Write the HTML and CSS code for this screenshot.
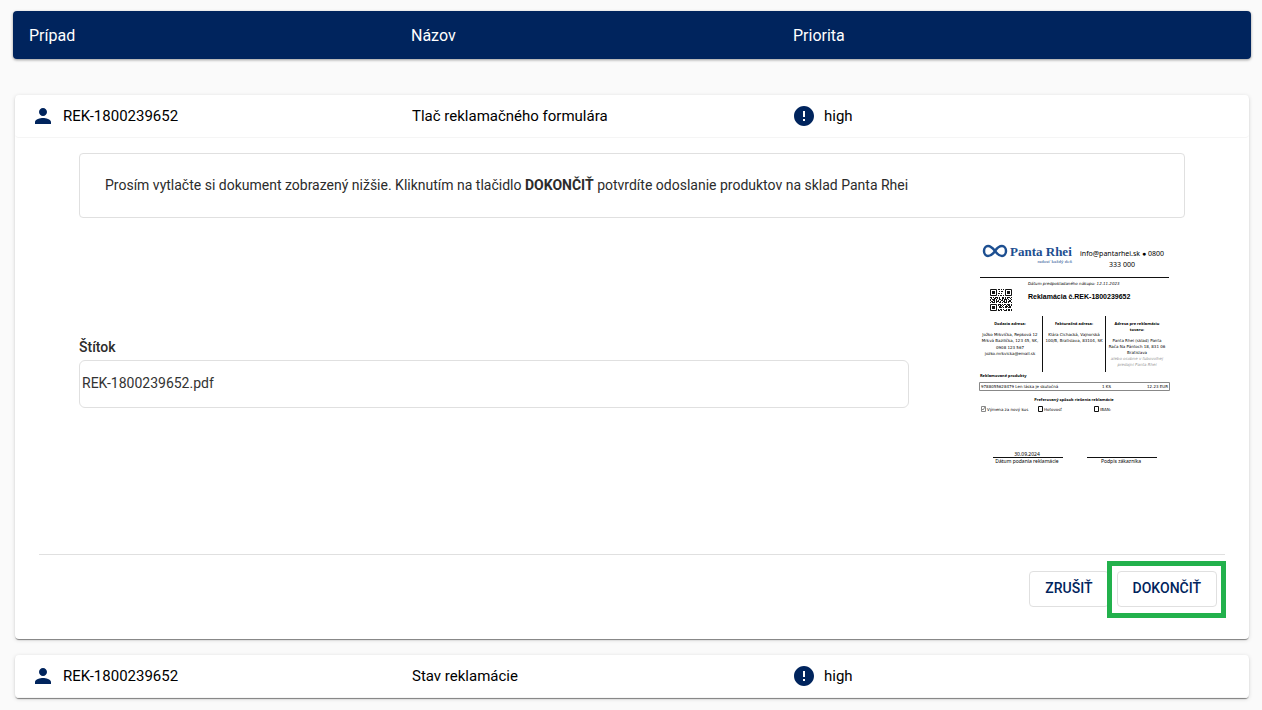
FILE: index.html
```html
<!DOCTYPE html>
<html lang="sk">
<head>
    <meta charset="UTF-8">
    <meta name="viewport" content="width=device-width, initial-scale=1.0">
    <title>Reklamácie</title>
    <link rel="stylesheet" href="styles.css">
</head>
<body>
    <svg width="0" height="0" class="sprite">
        <symbol id="icon-person" viewBox="2 2 20 20">
            <path d="M12 12c2.210 0 4-1.790 4-4s-1.790-4-4-4-4 1.790-4 4 1.790 4 4 4zm0 2c-2.670 0-8 1.340-8 4v2h16v-2c0-2.660-5.330-4-8-4z"/>
        </symbol>
        <symbol id="icon-error" viewBox="2 2 20 20">
            <path d="M12 2C6.480 2 2 6.480 2 12s4.480 10 10 10 10-4.480 10-10S17.520 2 12 2zm1 15h-2v-2h2v2zm0-4h-2V7h2v6z"/>
        </symbol>
    </svg>

    <header class="table-head">
        <span>Prípad</span>
        <span>Názov</span>
        <span>Priorita</span>
    </header>

    <main class="case-list">
        <section class="card">
            <div class="case-row">
                <span class="cell"><svg class="icon"><use href="#icon-person"/></svg>REK-1800239652</span>
                <span class="cell">Tlač reklamačného formulára</span>
                <span class="cell"><svg class="icon"><use href="#icon-error"/></svg>high</span>
            </div>
            <div class="details">
                <div class="task">
                    <p class="info">Prosím vytlačte si dokument zobrazený nižšie. Kliknutím na tlačidlo <b>DOKONČIŤ</b> potvrdíte odoslanie produktov na sklad Panta Rhei</p>
                    <div class="document">
                        <div class="field">
                            <label for="label-file">Štítok</label>
                            <input type="text" id="label-file" value="REK-1800239652.pdf" readonly>
                        </div>
                        <svg class="preview" viewBox="0 4 221 312">
                            <!-- logo -->
                            <path class="logo-mark" d="M31 26c-3-4-5-5-7-5a4 5 0 0 0 0 10c3 0 5-2 7-5s4-5 7-5a4 5 0 0 1 0 10c-2 0-4-1-7-5z"/>
                            <text class="logo-text" x="46" y="31">Panta Rhei</text>
                            <text class="logo-sub" x="108" y="38">radosť každý deň</text>
                            <text class="contact" x="158" y="31">info@pantarhei.sk ● 0800</text>
                            <text class="contact" x="158" y="42">333 000</text>
                            <path class="rule" d="M16 52.500h189"/>

                            <!-- QR code -->
                            <g class="qr">
                                <path d="M26.500 64.500h6v6h-6zM41.500 64.500h6v6h-6zM26.500 79.500h6v6h-6z"/>
                                <path d="M28 67.500h3M43 67.500h3M28 82.500h3" stroke-width="3"/>
                                <path d="M34 64.500h6M34 68.500h5" stroke-dasharray="2 1 1 1"/>
                                <path d="M35 66.500h5M34 70.500h6" stroke-dasharray="1 1 2 1"/>
                                <path d="M26 72.500h22M27 76.500h21" stroke-dasharray="2 1 1 1 3 1 1 2"/>
                                <path d="M26 74.500h22M26 77.500h22" stroke-dasharray="1 1 3 1 1 2 2 1"/>
                                <path d="M27 73.500h20M26 75.500h21" stroke-dasharray="1 2 2 1 1 1"/>
                                <path d="M34 79.500h14M35 82.500h13" stroke-dasharray="3 1 1 1 2 1"/>
                                <path d="M34 80.500h14M34 84.500h14" stroke-dasharray="1 1 2 1 1 2"/>
                                <path d="M35 81.500h12M34 85.500h14" stroke-dasharray="2 1 1 2 3 1"/>
                            </g>
                            <text class="purchase" x="64" y="60">Dátum predpokladaného nákupu: 12.11.2023</text>
                            <text class="title" x="64" y="74">Reklamácia č.REK-1800239652</text>

                            <!-- addresses -->
                            <path class="rule" d="M78.500 91v56M141.500 91v56"/>
                            <g class="address">
                                <text class="bold" x="46" y="100">Dodacia adresa:</text>
                                <text x="46" y="111">Jožko Mrkvička, Repková 12</text>
                                <text x="46" y="117">Mrkvá Bazilička, 123 45, SK,</text>
                                <text x="46" y="124">0908 123 567</text>
                                <text x="46" y="130">jozko.mrkvicka@email.sk</text>
                                <text class="bold" x="110" y="100">Fakturačná adresa:</text>
                                <text x="110" y="111">Klára Cichacká, Vajnorská</text>
                                <text x="110" y="117">100/B, Bratislava, 83104, SK</text>
                                <text class="bold" x="173" y="100">Adresa pre reklamáciu</text>
                                <text class="bold" x="173" y="106">tovaru:</text>
                                <text x="173" y="117">Panta Rhei (sklad) Panta</text>
                                <text x="173" y="123">Rača Na Pántoch 18, 831 06</text>
                                <text x="173" y="129">Bratislava</text>
                                <text class="note" x="173" y="135">alebo osobne v ľubovoľnej</text>
                                <text class="note" x="173" y="141">predajni Panta Rhei</text>
                            </g>

                            <!-- products -->
                            <text class="bold" x="16" y="152">Reklamované produkty</text>
                            <path class="box" d="M15.500 157.500h190v8h-190z"/>
                            <text x="17" y="163">9788055628479 Len láska je skutočná</text>
                            <text x="138" y="163">1 KS</text>
                            <text class="end" x="204" y="163">12.23 EUR</text>

                            <text class="bold middle" x="110" y="176">Preferovaný spôsob riešenia reklamácie</text>
                            <path class="box" d="M17.500 181.500h4v5h-4zM18 184l1 1 2-3"/>
                            <path class="rule" d="M74.500 181.500h4v5h-4zM130.500 181.500h4v5h-4z"/>
                            <text x="23" y="186">Výmena za nový kus</text>
                            <text x="80" y="186">Hotovosť</text>
                            <text x="136" y="186">IBAN:</text>

                            <!-- signatures -->
                            <path class="rule" d="M29 232.500h70M123 232.500h70"/>
                            <g class="sign">
                                <text x="63" y="231">30.09.2024</text>
                                <text x="63" y="238">Dátum podania reklamácie</text>
                                <text x="157" y="238">Podpis zákazníka</text>
                            </g>
                        </svg>
                    </div>
                </div>
                <div class="actions">
                    <button type="button">ZRUŠIŤ</button>
                    <button type="button" class="highlight">DOKONČIŤ</button>
                </div>
            </div>
        </section>

        <section class="card">
            <div class="case-row">
                <span class="cell"><svg class="icon"><use href="#icon-person"/></svg>REK-1800239652</span>
                <span class="cell">Stav reklamácie</span>
                <span class="cell"><svg class="icon"><use href="#icon-error"/></svg>high</span>
            </div>
        </section>
    </main>
</body>
</html>
```
FILE: styles.css
```css
* {
    box-sizing: border-box;
}
body {
    margin: 0;
    padding: 11px 11px 12px 13px;
    background-color: #fafafa;
    color: #2c2c2c;
    font-family: Roboto, "Liberation Sans", sans-serif;
    font-size: 14px;
}
.sprite {
    position: absolute;
}
.table-head,
.case-row {
    display: grid;
    grid-template-columns: repeat(3, 1fr);
    align-items: center;
}
.table-head {
    height: 48px;
    padding: 0 76px 0 16px;
    border-radius: 4px;
    background-color: #00245d;
    color: #fff;
    font-size: 16px;
    box-shadow: 0 1px 3px rgba(0, 0, 0, 0.4);
}
.case-list {
    display: flex;
    flex-direction: column;
    gap: 16px;
    padding: 36px 2px 0;
}
.card {
    border-radius: 4px;
    background-color: #fff;
    box-shadow: 0 2px 1px -1px rgba(0, 0, 0, 0.3), 0 1px 1px rgba(0, 0, 0, 0.2), 0 1px 4px rgba(0, 0, 0, 0.14);
}
.case-row {
    height: 43px;
    padding: 0 73px 0 15px;
    border-bottom: 1px solid #f5f5f5;
    border-radius: 4px;
    color: #000;
    font-size: 15px;
}
.cell {
    display: flex;
    align-items: center;
    gap: 10px;
}
.cell:first-child {
    padding-left: 3px;
}
.icon {
    width: 20px;
    height: 20px;
    fill: #00245d;
}
.details {
    padding: 15px 24px 32px;
}
.task {
    padding: 0 40px 13px;
    border-bottom: 1px solid #e0e0e0;
}
.info {
    margin: 0 0 11px;
    padding: 23px 25px;
    border: 1px solid #e0e0e0;
    border-radius: 4px;
    line-height: 17px;
}
.document {
    display: flex;
    align-items: center;
    justify-content: space-between;
    gap: 16px;
}
.field {
    width: 75%;
    padding-bottom: 24px;
}
.field label {
    display: block;
    margin-bottom: 4px;
    font-weight: 500;
    line-height: 18px;
}
.field input {
    width: 100%;
    height: 48px;
    padding: 0 2px 2px;
    border: 1px solid #e0e0e0;
    border-radius: 6px;
    background-color: #fff;
    color: #333;
    font: inherit;
}
.actions {
    display: flex;
    justify-content: flex-end;
    gap: 8px;
    padding: 16px 8px 0;
}
.actions button {
    position: relative;
    height: 36px;
    padding: 0 15px 2px;
    border: 1px solid #e0e0e0;
    border-radius: 4px;
    background-color: #fff;
    color: #00245d;
    font: 500 14px Roboto, "Liberation Sans", sans-serif;
    cursor: pointer;
}
.actions .highlight::after {
    content: "";
    position: absolute;
    inset: -11px -10px -12px -11px;
    border: 5px solid #22b14c;
}

/* document preview */
.preview {
    flex: none;
    width: 221px;
    height: 312px;
    font-family: "DejaVu Sans", Arial, sans-serif;
    font-size: 4px;
    fill: #000;
}
.logo-mark {
    fill: none;
    stroke: #1d4f91;
    stroke-width: 2.5;
}
.logo-text {
    fill: #1d4f91;
    font: bold 13px "Liberation Serif", serif;
}
.logo-sub {
    fill: #1d4f91;
    font: 5px "Liberation Serif", serif;
    text-anchor: end;
}
.contact {
    font: 7px "Noto Sans", sans-serif;
    text-anchor: middle;
}
.rule,
.box,
.qr {
    fill: none;
    stroke: #111;
}
.box {
    stroke: #888;
}
.purchase {
    font-style: italic;
}
.title {
    font: bold 7px "Liberation Sans", sans-serif;
}
.bold {
    font: bold 4px "Noto Sans", sans-serif;
}
.address,
.middle {
    text-anchor: middle;
}
.note {
    fill: #999;
    font-style: italic;
}
.end {
    text-anchor: end;
}
.sign {
    font: 5px "Noto Sans", sans-serif;
    text-anchor: middle;
}
```
